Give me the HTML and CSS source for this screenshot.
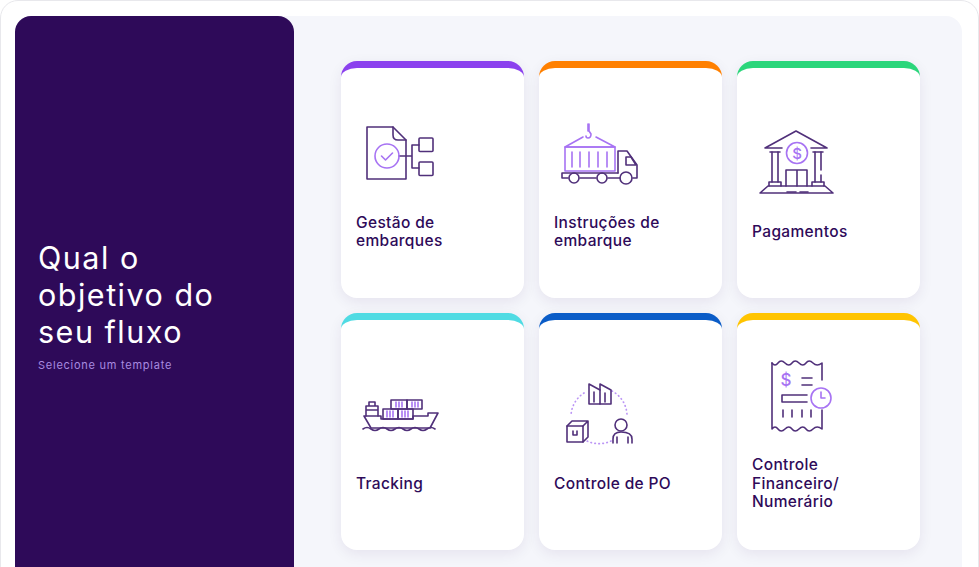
FILE: index.html
```html
<!DOCTYPE html>
<html lang="pt-BR">
<head>
<meta charset="utf-8">
<title>Qual o objetivo do seu fluxo</title>
<link rel="stylesheet" href="styles.css">
</head>
<body>
<div class="app">
  <div class="panel">
    <aside class="side">
      <h1 class="side-title">Qual o objetivo do seu fluxo</h1>
      <p class="side-sub">Selecione um template</p>
    </aside>
    <main class="grid">
      <a class="card card-purple">
        <svg class="icon" viewBox="356 102 100 90">
          <g class="dark">
            <path d="M393 127H367V179H406V140Z"/>
            <path d="M393 127V135Q393 140 398 140H406"/>
            <path d="M399 156H412M412 145V168M412 145H419M412 168H419"/>
            <rect x="419" y="138" width="14" height="13.500" rx="1"/>
            <rect x="419" y="162" width="14" height="13.500" rx="1"/>
          </g>
          <g class="light">
            <circle cx="387" cy="156" r="12"/>
            <path d="M381.500 156L385.500 160L392.500 153"/>
          </g>
        </svg>
        <span class="label">Gestão de embarques</span>
      </a>
      <a class="card card-orange">
        <svg class="icon" viewBox="553 102 100 90">
          <g class="light">
            <path d="M588 124V131M587 124V131M588 131L590 134Q590 138 587 138Q585 138 585 136"/>
            <path d="M582 137L564 147H614L595 137"/>
            <rect x="564" y="147" width="50" height="24"/>
            <path d="M571 152V167M579 152V167M588 152V167M597 152V167M606 152V167"/>
          </g>
          <g class="dark">
            <path d="M617 173V151H626L636 165V178H632"/>
            <path d="M625 157H630L635 165H625Z"/>
            <path d="M561 173H617M561 173V178H567M579 178H595M607 178H619"/>
            <circle cx="573" cy="178" r="5"/>
            <circle cx="601" cy="178" r="5"/>
            <circle cx="625" cy="178" r="6"/>
          </g>
        </svg>
        <span class="label">Instruções de embarque</span>
      </a>
      <a class="card card-green">
        <svg class="icon" viewBox="752 102 100 90">
          <g class="dark">
            <path d="M782 148H765L796 131L827 148H811"/>
            <path d="M770 152H780M813 152H823"/>
            <path d="M772 152V182M778 152V182M815 152V182M821 152V170M821 175V182"/>
            <path d="M769 186V182H781V186M812 186V182H824V186"/>
            <path d="M786 186V170H807V186M797 170V186"/>
            <path d="M768 186H825L833 193H760Z"/>
            <path d="M787 192H796M800 192H808"/>
          </g>
          <g class="light">
            <circle cx="797" cy="153" r="10.500"/>
            <text class="icon-sign" x="797" y="158.500">$</text>
          </g>
        </svg>
        <span class="label">Pagamentos</span>
      </a>
      <a class="card card-cyan">
        <svg class="icon" viewBox="356 354 100 90">
          <g class="dark">
            <path d="M364 416H381V419H413V416H428V413H438L430 428H371Z"/>
            <path d="M366 416V406H378V416M369 406V402H375V406M366 410H378"/>
            <rect x="391" y="400" width="16" height="9"/>
            <rect x="407" y="400" width="15" height="9"/>
            <rect x="383" y="409" width="15" height="10"/>
            <rect x="398" y="409" width="15" height="10"/>
            <path d="M363 429Q367 426 371 429T379 429T387 429T395 429T403 429T411 429T419 429T427 429T435 429"/>
          </g>
          <g class="light">
            <path d="M396 402V407M399 402V407M402 402V407M412 402V407M415 402V407M418 402V407"/>
            <path d="M387 411V417M390 411V417M393 411V417M402 411V417M405 411V417M408 411V417"/>
          </g>
        </svg>
        <span class="label">Tracking</span>
      </a>
      <a class="card card-blue">
        <svg class="icon" viewBox="553 354 100 90">
          <path class="dots" d="M583 393A28 28 0 0 0 570 416M611 391A28 28 0 0 1 626 416M610 441A28 28 0 0 1 586 441"/>
          <g class="dark">
            <path d="M588 404V384L599 390V404Z"/>
            <path d="M599 390V384L610 390V404H599"/>
            <path d="M593 392V402M604 393V402"/>
            <rect x="566" y="426" width="16" height="16"/>
            <path d="M566 426L571 421H587V437L582 442M582 426L587 421"/>
            <path d="M572 431V435H576V431"/>
            <circle cx="620" cy="425" r="6"/>
            <path d="M612 443V439Q612 432 620 432Q631 432 631 439V443M616 437V443M627 437V443"/>
          </g>
        </svg>
        <span class="label">Controle de PO</span>
      </a>
      <a class="card card-yellow">
        <svg class="icon" viewBox="752 354 100 90">
          <g class="dark">
            <path d="M772 363Q775 367 778 363T785 363T792 363T799 363T806 363T813 363T822 363V380"/>
            <path d="M772 363V429Q775 425 778 429T785 429T792 429T799 429T806 429T813 429T822 429V410"/>
            <path d="M802 378H812M802 385H812M807 395H782V402H807M783 410V417M792 410V417M802 410V417M811 410V417"/>
          </g>
          <g class="light">
            <text class="icon-dollar" x="786" y="386">$</text>
            <circle class="clock" cx="821" cy="398" r="10"/>
            <path d="M821 392V398H825"/>
          </g>
        </svg>
        <span class="label">Controle Financeiro/ Numerário</span>
      </a>
    </main>
  </div>
</div>
</body>
</html>
```

FILE: styles.css
```css
* { box-sizing: border-box; }
html, body { margin: 0; height: 100%; overflow: hidden; background: #fff; }
body { font-family: "Inter", "Liberation Sans", sans-serif; }

.app {
  width: 979px;
  border: 1px solid #e8e8ec;
  border-radius: 18px;
  background: #fff;
  padding: 15px 16px 15px 14px;
}
.panel {
  display: flex;
  background: #f5f6fb;
  border-radius: 16px;
}
.side {
  flex: 0 0 279px;
  background: #2e0a59;
  border-radius: 16px;
  padding: 0 23px;
  display: flex;
  flex-direction: column;
  justify-content: center;
}
.side-title {
  margin: 0;
  width: 200px;
  color: #fff;
  font-size: 30.500px;
  line-height: 37px;
  letter-spacing: 1.500px;
  font-weight: 400;
}
.side-sub {
  margin: 7px 0 0;
  color: #a88be0;
  font-size: 11px;
  line-height: 16px;
  letter-spacing: .75px;
  font-weight: 400;
}
.grid {
  display: grid;
  grid-template-columns: repeat(3, 183px);
  grid-auto-rows: 237px;
  gap: 15px;
  padding: 45px 42px 45px 47px;
}
.card {
  display: flex;
  flex-direction: column;
  background: #fff;
  border-top: 7px solid;
  border-radius: 16px;
  box-shadow: 0 4px 14px rgba(46, 10, 89, .08);
  padding: 34px 15px 0;
  color: #2e0a59;
}
.card-purple { border-top-color: #8b41ee; }
.card-orange { border-top-color: #ff8000; }
.card-green { border-top-color: #2bd67b; }
.card-cyan { border-top-color: #4fdbe3; }
.card-blue { border-top-color: #0a5cc7; }
.card-yellow { border-top-color: #ffc400; }

.icon { display: block; width: 100px; height: 90px; flex: none; overflow: visible; }
.icon g, .dots { fill: none; stroke-linecap: round; stroke-linejoin: round; stroke-width: 1.600; }
.dark { stroke: #50307a; }
.light { stroke: #a773f3; }
.dots { stroke: #bb95f5; stroke-dasharray: 0.5 3.5; stroke-width: 1.700; }
.icon-sign, .icon-dollar {
  fill: #a773f3;
  stroke: none;
  text-anchor: middle;
  font-family: "Inter", sans-serif;
  font-weight: 500;
}
.icon-sign { font-size: 15px; }
.icon-dollar { font-size: 17px; }
.clock { fill: #fff; }

.label {
  flex: none;
  max-width: 128px;
  height: 60px;
  margin-top: 10px;
  display: flex;
  align-items: center;
  font-size: 15.500px;
  line-height: 18.500px;
  font-weight: 500;
  letter-spacing: .35px;
}
```
